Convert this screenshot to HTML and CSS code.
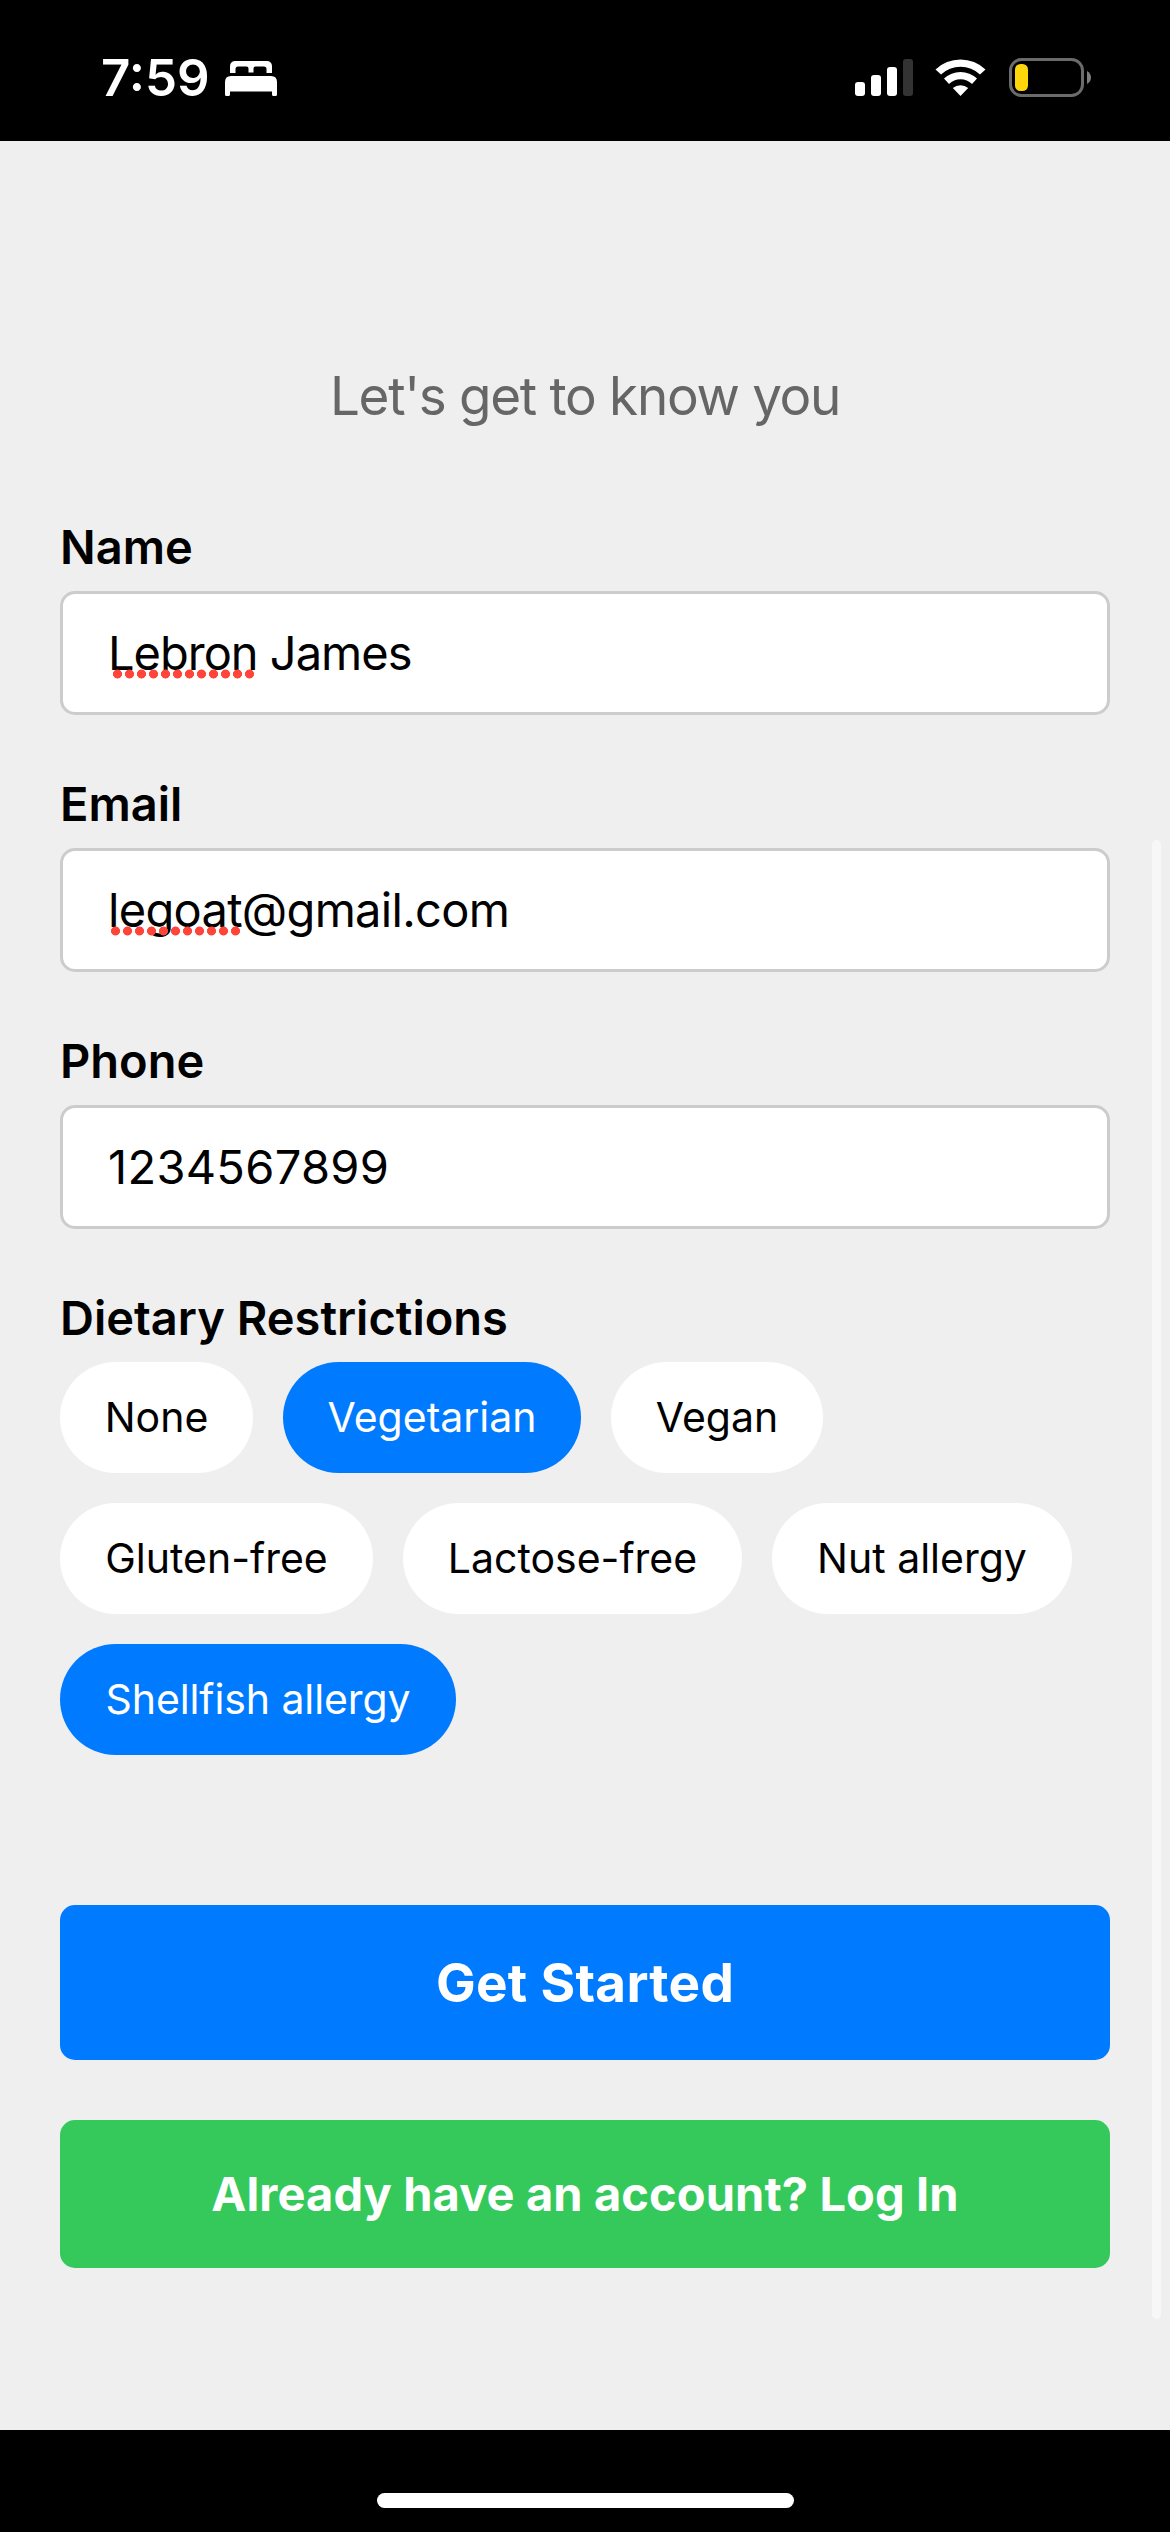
FILE: index.html
```html
<!DOCTYPE html>
<html lang="en">
<head>
  <meta charset="UTF-8">
  <title>Sign Up</title>
  <link rel="stylesheet" href="styles.css">
</head>
<body>
  <div class="status-bar">
    <div class="status-left">
      <span class="time">7:59</span>
      <svg class="bed" width="52" height="36" viewBox="0 0 52 36" fill="#fff">
        <path d="M5 12V5.500Q5 0 10.500 0H41.500Q47 0 47 5.500V12H41.500V8Q41.500 5.500 39 5.500H30.500Q28.500 5.500 28.500 7.500V11.500H23.500V7.500Q23.500 5.500 21.500 5.500H13Q10.500 5.500 10.500 8V12Z"/>
        <path d="M0 21Q0 15 6 15H46Q52 15 52 21V33.500Q52 35 50.500 35H48.500Q47 35 47 33.500V30.500H5V33.500Q5 35 3.500 35H1.500Q0 35 0 33.500Z"/>
      </svg>
    </div>
    <div class="status-right">
      <svg width="58" height="40" viewBox="0 0 58 40" fill="#fff">
        <rect x="0" y="25" width="10" height="14" rx="3"/>
        <rect x="16" y="18" width="10" height="21" rx="3"/>
        <rect x="32" y="10" width="10" height="29" rx="3"/>
        <rect x="48" y="2" width="10" height="37" rx="3" fill="#333"/>
      </svg>
      <svg width="52" height="40" viewBox="0 0 52 40" fill="#fff">
        <path d="M0.500 12.500A36 36 0 0 1 50.500 12.500L45 17.500A28.500 28.500 0 0 0 6 17.500Z"/>
        <path d="M9 21.500A24 24 0 0 1 42 21.500L37 27A16.500 16.500 0 0 0 14 27Z"/>
        <path d="M17.800 31A12 12 0 0 1 33.200 31L25.500 39Z"/>
      </svg>
      <svg width="83" height="40" viewBox="0 0 83 40">
        <rect x="1.500" y="2.500" width="72" height="36" rx="11" fill="none" stroke="#6b6b6b" stroke-width="3"/>
        <rect x="6" y="7" width="13" height="27" rx="5.500" fill="#ffd60a"/>
        <path d="M78 14Q82 16.500 82 20.500T78 27Z" fill="#7d7d7d"/>
      </svg>
    </div>
  </div>

  <div class="container">
    <h1 class="subtitle">Let's get to know you</h1>

    <label class="label label-name">Name</label>
    <div class="input input-name"><span class="misspelled">Lebron</span>&nbsp;James</div>

    <label class="label label-email">Email</label>
    <div class="input input-email"><span class="misspelled">legoat</span>@gmail.com</div>

    <label class="label label-phone">Phone</label>
    <div class="input input-phone">1234567899</div>

    <label class="label label-diet">Dietary Restrictions</label>
    <div class="chips">
      <button class="chip none">None</button>
      <button class="chip vegetarian selected">Vegetarian</button>
      <button class="chip vegan">Vegan</button>
      <button class="chip gluten">Gluten-free</button>
      <button class="chip lactose">Lactose-free</button>
      <button class="chip nut">Nut allergy</button>
      <button class="chip shellfish selected">Shellfish allergy</button>
    </div>

    <button class="button start">Get Started</button>
    <button class="button login">Already have an account? Log In</button>

    <div class="scrollbar"></div>
  </div>

  <div class="home-bar">
    <div class="home-indicator"></div>
  </div>
</body>
</html>
```
FILE: styles.css
```css
* {
  margin: 0;
  padding: 0;
  box-sizing: border-box;
  font-family: Inter, 'Liberation Sans', sans-serif;
}

body {
  width: 1170px;
  height: 2532px;
  background: #000;
  overflow: hidden;
}

.status-bar {
  height: 141px;
  background: #000;
  color: #fff;
  display: flex;
  justify-content: space-between;
  padding: 57px 78px 0 101px;
}

.status-left {
  display: flex;
  gap: 16px;
}

.time {
  width: 108px;
  font-size: 51px;
  font-weight: 600;
  line-height: 41px;
  white-space: nowrap;
}

.bed {
  margin-top: 4px;
}

.status-right {
  display: flex;
  gap: 22px;
}

.container {
  position: relative;
  height: 2289px;
  background: #efefef;
  padding: 225px 60px 0;
}

.subtitle {
  font-size: 53px;
  font-weight: 400;
  line-height: 60px;
  letter-spacing: -1.3px;
  text-align: center;
  color: #666;
  margin-bottom: 92px;
}

.label {
  display: block;
  font-size: 47px;
  font-weight: 600;
  line-height: 57px;
  margin-bottom: 16px;
}

.input {
  display: flex;
  align-items: center;
  height: 124px;
  background: #fff;
  border: 3px solid #ccc;
  border-radius: 15px;
  padding: 0 45px 2px;
  margin-bottom: 60px;
  font-size: 47px;
  line-height: 57px;
}

.input-name {
  letter-spacing: -1px;
}

.input-email {
  letter-spacing: -0.7px;
}

.input-phone {
  letter-spacing: 0.3px;
}

.misspelled {
  position: relative;
}

/* red spell check dots */
.misspelled::after {
  content: "";
  position: absolute;
  left: 5px;
  top: 45px;
  width: 144px;
  height: 10px;
  background: radial-gradient(circle at 4.5px 5px, #ff453a 4.2px, transparent 4.8px) 0 0 / 12px 10px repeat-x;
}

.input-email .misspelled::after {
  left: 3px;
  width: 132px;
}

.chips {
  display: flex;
  flex-wrap: wrap;
  gap: 30px;
}

.label-diet {
  margin-bottom: 16px;
}

.chip {
  height: 111px;
  padding-bottom: 2px;
  border: none;
  border-radius: 60px;
  background: #fff;
  color: #000;
  font-size: 41px;
  white-space: nowrap;
}

.chip.selected {
  background: #007aff;
  color: #fff;
}

.none { width: 193px; }
.vegetarian { width: 298px; }
.vegan { width: 212px; }
.gluten { width: 313px; }
.lactose { width: 339px; }
.nut { width: 300px; }
.shellfish { width: 396px; letter-spacing: -0.1px; }

.button {
  display: block;
  width: 100%;
  border: none;
  border-radius: 15px;
  color: #fff;
  font-weight: 700;
}

.start {
  height: 155px;
  margin-top: 150px;
  background: #007aff;
  font-size: 53px;
  letter-spacing: 0.3px;
}

.login {
  height: 148px;
  margin-top: 60px;
  padding-bottom: 2px;
  background: #35c95b;
  font-size: 47px;
  letter-spacing: 0.1px;
}

.scrollbar {
  position: absolute;
  top: 699px;
  right: 9px;
  width: 9px;
  height: 1479px;
  border-radius: 5px;
  background: #f7f7f7;
}

.home-bar {
  height: 102px;
  background: #000;
  padding-top: 63px;
}

.home-indicator {
  width: 417px;
  height: 15px;
  margin: 0 auto;
  border-radius: 8px;
  background: #fff;
}
```
